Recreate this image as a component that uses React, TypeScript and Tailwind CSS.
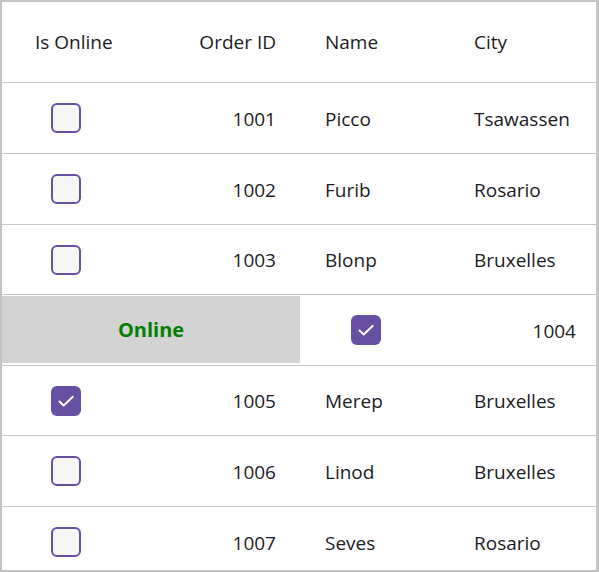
import React from "react";

type Order = {
  online: boolean;
  id: number;
  name: string;
  city: string;
  h: string;
};

const ORDERS: Order[] = [
  { online: false, id: 1001, name: "Picco", city: "Tsawassen", h: "h-[71px]" },
  { online: false, id: 1002, name: "Furib", city: "Rosario", h: "h-[71px]" },
  { online: false, id: 1003, name: "Blonp", city: "Bruxelles", h: "h-[70px]" },
];

const MORE: Order[] = [
  { online: true, id: 1005, name: "Merep", city: "Bruxelles", h: "h-[70px]" },
  { online: false, id: 1006, name: "Linod", city: "Bruxelles", h: "h-[71px]" },
  { online: false, id: 1007, name: "Seves", city: "Rosario", h: "h-[71px]" },
];

const Check = ({ checked }: { checked: boolean }) =>
  checked ? (
    <div className="w-[30px] h-[30px] rounded-[6px] bg-[#6750a4]">
      <svg width="30" height="30" viewBox="0 0 30 30" fill="none">
        <path d="M8.5 15.5l4.2 4L21.8 10.8" stroke="#fff" strokeWidth="1.9" strokeLinecap="round" strokeLinejoin="round" />
      </svg>
    </div>
  ) : (
    <div className="w-[30px] h-[30px] rounded-[6px] border-2 border-[#6750a4] bg-[#f7f7f7]" />
  );

const Row = ({ o }: { o: Order }) => (
  <div className={`flex shrink-0 border-b border-[#cac4d0] ${o.h}`}>
    <div className="w-[148px] flex items-center pl-[49px]">
      <Check checked={o.online} />
    </div>
    <div className="w-[150px] flex items-center justify-end pr-[24px] pt-[2px]">{o.id}</div>
    <div className="w-[150px] flex items-center pl-[25px] pt-[2px]">{o.name}</div>
    <div className="flex-1 flex items-center pl-[24px] pt-[2px]">{o.city}</div>
  </div>
);

export default function App() {
  return (
    <div
      className="w-[599px] h-[572px] bg-white border-t-2 border-l-2 border-b-2 border-r-[3px] border-[#c4c4c4] flex flex-col overflow-hidden text-[19px] text-[#1c1b1f]"
      style={{ fontFamily: '"Open Sans", "Noto Sans", sans-serif' }}
    >
      <div className="flex shrink-0 h-[81px] border-b border-[#cac4d0]">
        <div className="w-[148px] flex items-center pl-[33px]">Is Online</div>
        <div className="w-[150px] flex items-center justify-end pr-[24px]">Order ID</div>
        <div className="w-[150px] flex items-center pl-[25px]">Name</div>
        <div className="flex-1 flex items-center pl-[24px]">City</div>
      </div>
      {ORDERS.map((o) => (
        <Row key={o.id} o={o} />
      ))}
      <div className="flex shrink-0 h-[71px] border-b border-[#cac4d0]">
        <div className="w-[298px] mt-[1px] mb-[2px] bg-[#d3d3d3] flex items-center justify-center">
          <span className="font-bold text-[20px] text-[#008000]">Online</span>
        </div>
        <div className="w-[150px] flex items-center pl-[51px]">
          <Check checked />
        </div>
        <div className="flex-1 flex items-center justify-end pr-[20px] pt-[2px]">1004</div>
      </div>
      {MORE.map((o) => (
        <Row key={o.id} o={o} />
      ))}
    </div>
  );
}
